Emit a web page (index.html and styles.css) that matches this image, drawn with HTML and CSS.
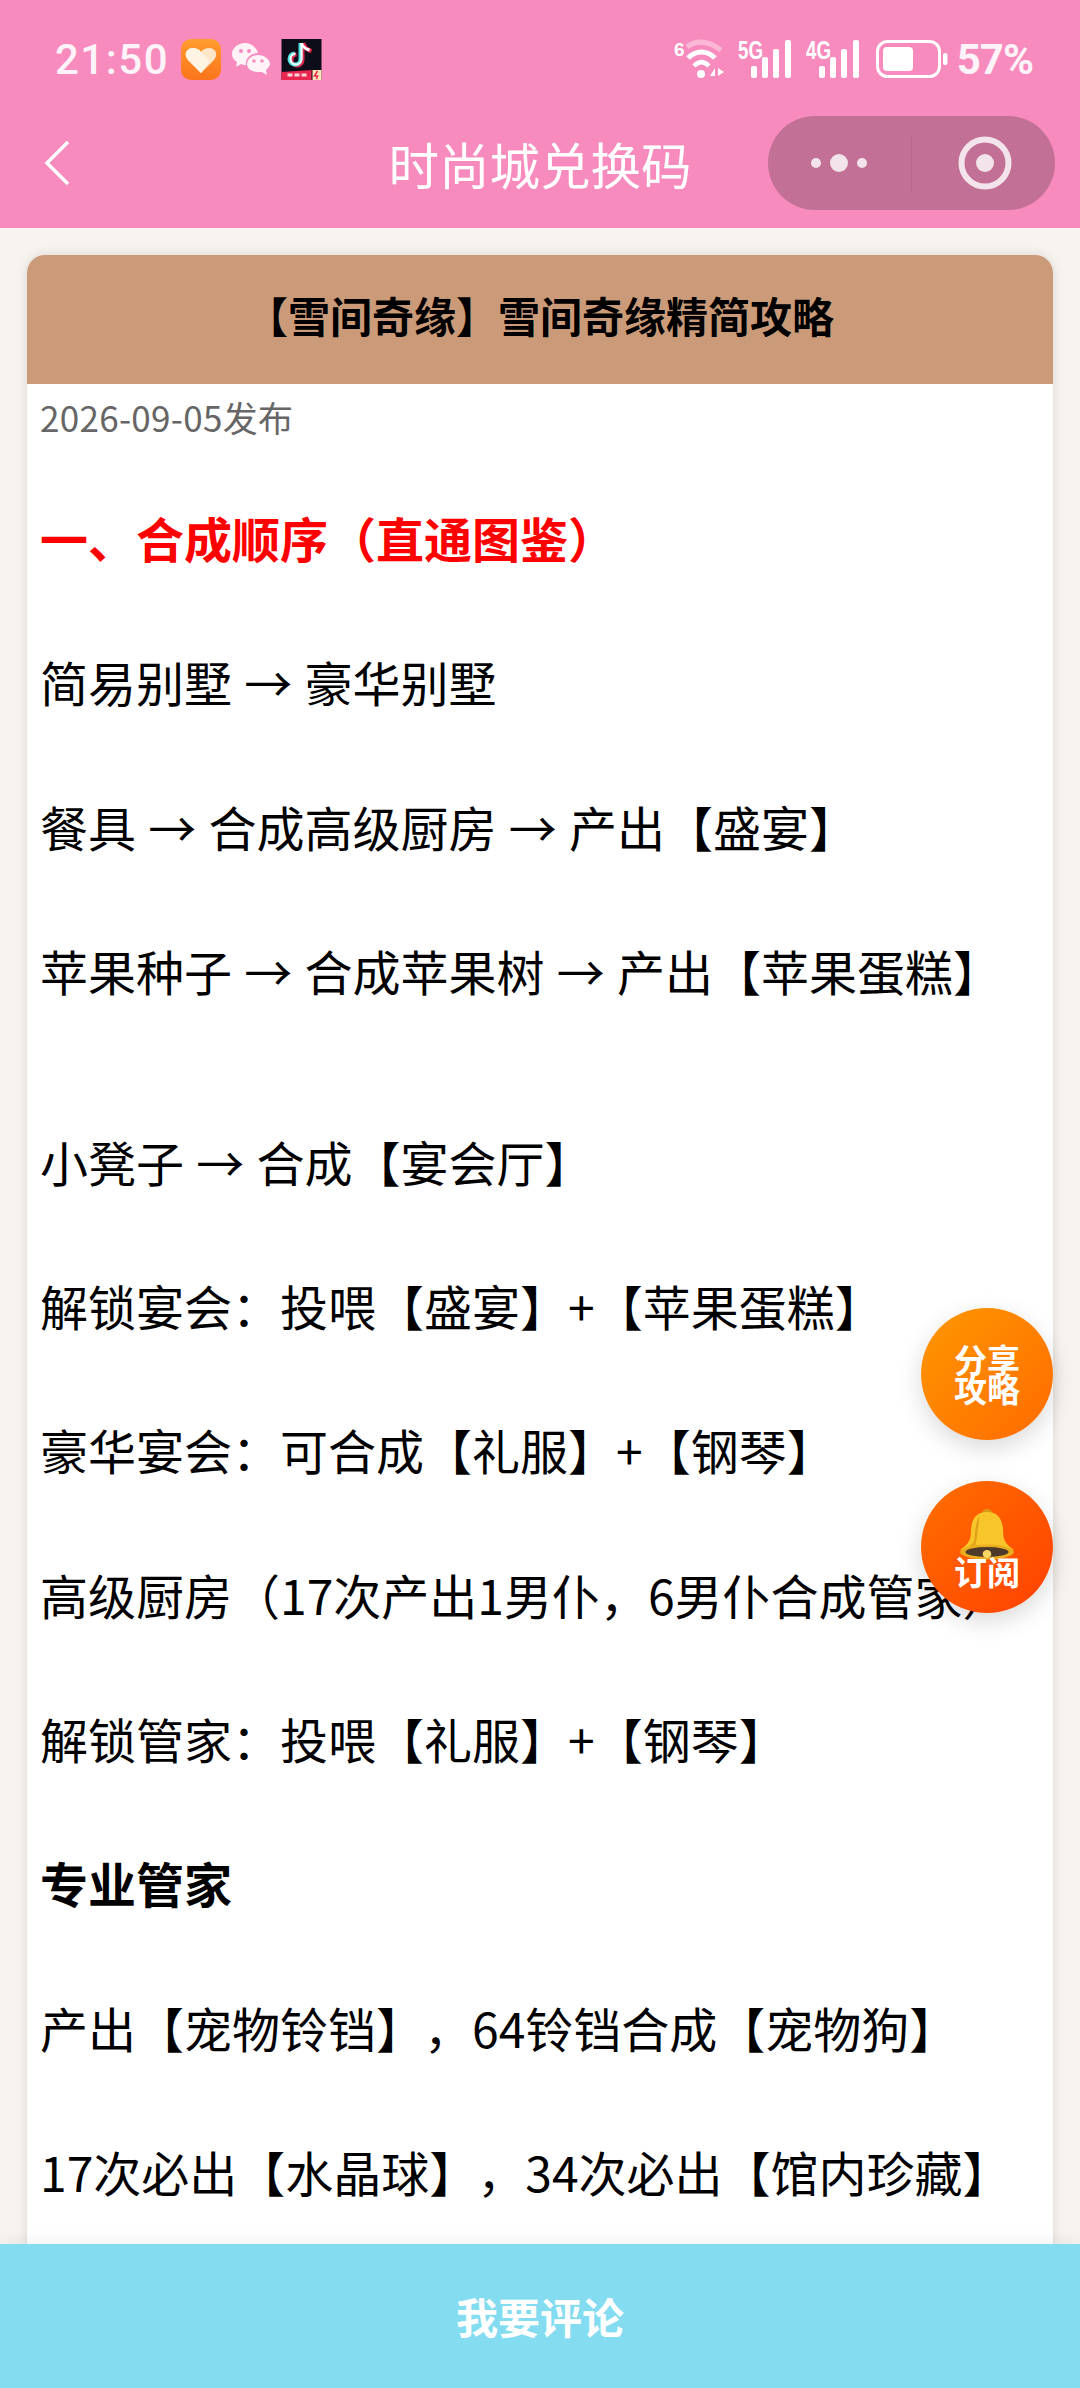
FILE: index.html
```html
<!DOCTYPE html>
<html lang="zh-CN">
<head>
    <meta charset="UTF-8">
    <meta name="viewport" content="width=device-width, initial-scale=1.0">
    <title>时尚城兑换码</title>
    <link rel="stylesheet" href="styles.css">
</head>
<body>
    <header class="top">
        <div class="status">
            <div class="status-left">
                <span class="time">21:50</span>
                <svg class="app-icon" width="40" height="41" viewBox="0 0 40 41">
                    <defs>
                        <linearGradient id="heartBg" x1="0" y1="0" x2="0" y2="1">
                            <stop offset="0" stop-color="#ff9c2e"/>
                            <stop offset="1" stop-color="#fb741c"/>
                        </linearGradient>
                    </defs>
                    <rect width="40" height="41" rx="10" fill="url(#heartBg)"/>
                    <path d="M20 34 L7 21 C2 15 6 9 12 9 C15 9 18 10 20 13 C22 10 25 9 28 9 C34 9 38 15 33 21 Z" fill="#ffe6c8"/>
                    <path d="M12 9 C15 9 18 10 20 13 L29 22 L20 34 L7 21 C2 15 6 9 12 9 Z" fill="#fff3e4"/>
                </svg>
                <svg class="app-icon" width="38" height="34" viewBox="0 0 38 34">
                    <path d="M13 1 C6 1 0 6 0 12 C0 16 2 18 5 20 L4 25 L9 22 C11 23 13 23 14 23 C13 17 18 11 26 11 C24 5 19 1 13 1 Z" fill="#fff3f8"/>
                    <path d="M26 13 C20 13 15 17 15 22 C15 27 20 30 26 30 C28 30 29 30 30 30 L35 33 L34 28 C36 26 38 24 38 22 C38 17 32 13 26 13 Z" fill="#fff3f8"/>
                    <circle cx="9" cy="9" r="2" fill="#f78bbd"/>
                    <circle cx="17" cy="9" r="2" fill="#f78bbd"/>
                    <circle cx="22" cy="19" r="1.7" fill="#f78bbd"/>
                    <circle cx="30" cy="19" r="1.7" fill="#f78bbd"/>
                </svg>
                <svg class="app-icon" width="41" height="41" viewBox="0 0 40 41">
                    <rect width="40" height="41" fill="#0c0d18"/>
                    <path d="M0 41 V33 L30 31 V41 Z" fill="#e8264f"/>
                    <rect x="31" y="31" width="9" height="10" fill="#fbe3b8"/>
                    <path d="M36 32 L33 37 H36 L35 40" fill="none" stroke="#e8264f" stroke-width="1.500"/>
                    <path d="M6 36 H27" stroke="#fbd5d5" stroke-width="3" stroke-dasharray="5 2"/>
                    <path d="M21 5 V21 A5.500 5.500 0 1 1 15 15.500" fill="none" stroke="#e8264f" stroke-width="4"/>
                    <path d="M22 4 C23 9 26 11 30 12" fill="none" stroke="#e8264f" stroke-width="4"/>
                    <path d="M19 4 V20 A5.500 5.500 0 1 1 13 14.500" fill="none" stroke="#4fe3e0" stroke-width="4"/>
                    <path d="M20 4 V20 A5.500 5.500 0 1 1 14 14.500" fill="none" stroke="#fff" stroke-width="2"/>
                    <path d="M20 4 C21 8 24 10 28 11" fill="none" stroke="#fff" stroke-width="3"/>
                </svg>
            </div>
            <div class="status-right">
                <svg width="52" height="42" viewBox="0 0 52 42">
                    <text x="0" y="18" class="net-tiny">6</text>
                    <path d="M13 9 C22 2 33 2 47 12" fill="none" stroke="#fbb8d6" stroke-width="5"/>
                    <path d="M14 20 C22 12 33 12 41 20" fill="none" stroke="#fff" stroke-width="5"/>
                    <path d="M20 28 C25 23 30 23 35 28" fill="none" stroke="#fff" stroke-width="4.500"/>
                    <circle cx="27" cy="36" r="4" fill="#fff"/>
                    <path d="M36 38 L41 30 V38 Z M44 30 V38 L50 34 Z" fill="#fff"/>
                </svg>
                <div class="signal">
                    <span class="net-label">5G</span>
                    <svg width="56" height="38" viewBox="0 0 56 38">
                        <rect x="13" y="26" width="6" height="12" rx="2" fill="#fff"/>
                        <rect x="24" y="17" width="6" height="21" rx="2" fill="#fff"/>
                        <rect x="35" y="9" width="6" height="29" rx="2" fill="#fff"/>
                        <rect x="47" y="0" width="6" height="38" rx="2" fill="#fff"/>
                    </svg>
                </div>
                <div class="signal">
                    <span class="net-label">4G</span>
                    <svg width="56" height="38" viewBox="0 0 56 38">
                        <rect x="13" y="26" width="6" height="12" rx="2" fill="#fff"/>
                        <rect x="24" y="17" width="6" height="21" rx="2" fill="#fff"/>
                        <rect x="35" y="9" width="6" height="29" rx="2" fill="#fff"/>
                        <rect x="47" y="0" width="6" height="38" rx="2" fill="#fff"/>
                    </svg>
                </div>
                <svg class="battery" width="72" height="38" viewBox="0 0 72 38">
                    <rect x="1.500" y="1.500" width="62" height="35" rx="10" fill="none" stroke="#fff" stroke-width="3"/>
                    <rect x="7" y="7" width="30" height="24" rx="4" fill="#fff"/>
                    <rect x="67" y="13" width="4.500" height="12" rx="2" fill="#fff"/>
                </svg>
                <span class="battery-num">57%</span>
            </div>
        </div>
        <nav class="nav">
            <svg class="back" width="26" height="46" viewBox="0 0 26 46">
                <path d="M24 2 L3 23 L24 44" fill="none" stroke="#fff" stroke-width="3.500"/>
            </svg>
            <div class="nav-title">时尚城兑换码</div>
            <div class="capsule">
                <svg width="66" height="20" viewBox="0 0 66 20">
                    <circle cx="10" cy="10" r="5" fill="#f3e3ea"/>
                    <circle cx="33" cy="10" r="9" fill="#f3e3ea"/>
                    <circle cx="56" cy="10" r="5" fill="#f3e3ea"/>
                </svg>
                <div class="capsule-line"></div>
                <svg width="54" height="54" viewBox="0 0 54 54">
                    <circle cx="27" cy="27" r="23.500" fill="none" stroke="#f3e3ea" stroke-width="6"/>
                    <circle cx="27" cy="27" r="9" fill="#f3e3ea"/>
                </svg>
            </div>
        </nav>
    </header>

    <main class="page">
        <article class="card">
            <h1 class="card-title">【雪间奇缘】雪间奇缘精简攻略</h1>
            <div class="card-body">
                <div class="date">2026-09-05发布</div>
                <h2 class="red-head">一、合成顺序（直通图鉴）</h2>
                <p>简易别墅 → 豪华别墅</p>
                <p>餐具 → 合成高级厨房 → 产出【盛宴】</p>
                <p>苹果种子 → 合成苹果树 → 产出【苹果蛋糕】</p>
                <p class="gap">小凳子 → 合成【宴会厅】</p>
                <p>解锁宴会：投喂【盛宴】+【苹果蛋糕】</p>
                <p>豪华宴会：可合成【礼服】+【钢琴】</p>
                <p class="nowrap">高级厨房（17次产出1男仆，6男仆合成管家）</p>
                <p>解锁管家：投喂【礼服】+【钢琴】</p>
                <p><strong>专业管家</strong></p>
                <p>产出【宠物铃铛】，64铃铛合成【宠物狗】</p>
                <p>17次必出【水晶球】，34次必出【馆内珍藏】</p>
            </div>
        </article>
    </main>

    <footer class="comment-bar">我要评论</footer>

    <div class="float-btn share">分享<br>攻略</div>
    <div class="float-btn subscribe">
        <svg width="56" height="52" viewBox="0 0 52 52" preserveAspectRatio="none">
            <circle cx="26" cy="5" r="5" fill="#d99a14"/>
            <path d="M26 3 C14 3 11 13 11 24 C11 33 6 37 1 41 H51 C46 37 41 33 41 24 C41 13 38 3 26 3 Z" fill="#f8c62b"/>
            <path d="M19 7 C15 13 15 25 14 32 C12 36 8 38 6 41 H14 C17 32 18 16 19 7 Z" fill="#e0a21b"/>
            <ellipse cx="26" cy="43" rx="25" ry="7.500" fill="#e9ad1e"/>
            <ellipse cx="26" cy="43" rx="20" ry="5" fill="#4d3a2a"/>
            <circle cx="26" cy="45" r="4" fill="#f8d766"/>
        </svg>
        <span>订阅</span>
    </div>
</body>
</html>
```

FILE: styles.css
```css
html, body {
    margin: 0;
    padding: 0;
}
body {
    position: relative;
    display: flex;
    flex-direction: column;
    width: 1080px;
    height: 2388px;
    overflow: hidden;
    background-color: #f7f4ef;
    color: #000;
    font-family: "Noto Sans CJK SC", "Noto Sans", sans-serif;
    text-spacing-trim: space-all;
}

/* top pink area */
.top {
    background-color: #f78bbd;
    color: #fff;
    flex-shrink: 0;
}
.status {
    height: 116px;
    display: flex;
    justify-content: space-between;
    align-items: center;
    padding: 0 47px 0 55px;
    box-sizing: border-box;
}
.status-left {
    display: flex;
    align-items: center;
    gap: 11px;
    padding-top: 2px;
}
.time {
    font-family: Roboto, sans-serif;
    font-weight: 500;
    font-size: 42px;
    letter-spacing: 1.500px;
    color: #fdf3f8;
    margin-right: 1px;
}
.status-right {
    display: flex;
    align-items: center;
    gap: 12px;
    padding-top: 2px;
}
.signal {
    position: relative;
    display: flex;
}
.net-label {
    position: absolute;
    top: -1px;
    left: 0;
    font-family: "Liberation Sans", sans-serif;
    font-weight: 700;
    font-size: 25px;
    line-height: 22px;
    transform: scaleX(0.75);
    transform-origin: left;
}
.net-tiny {
    font-family: "Liberation Sans", sans-serif;
    font-weight: 700;
    font-size: 19px;
    fill: #fff;
}
.battery {
    margin-left: 2px;
}
.battery-num {
    font-family: Roboto, sans-serif;
    font-weight: 700;
    font-size: 42px;
    letter-spacing: -1px;
    color: #fdf3f8;
    margin-left: -3px;
}
.nav {
    position: relative;
    display: flex;
    justify-content: space-between;
    align-items: center;
    height: 94px;
    padding: 0 25px 18px 44px;
}
.back {
    display: block;
}
.nav-title {
    position: absolute;
    left: 0;
    right: 0;
    top: 0;
    height: 94px;
    line-height: 94px;
    text-align: center;
    font-size: 50.500px;
    font-weight: 400;
}
.capsule {
    position: relative;
    display: flex;
    align-items: center;
    width: 287px;
    height: 94px;
    border-radius: 47px;
    background-color: #c27095;
    box-sizing: border-box;
    padding-left: 38px;
}
.capsule-line {
    width: 1px;
    height: 56px;
    margin: 0 46px 0 39px;
    background-color: #b7688b;
}

/* content */
.page {
    flex: 1;
    min-height: 0;
    overflow: hidden;
    padding: 27px 27px 0;
}
.card {
    background-color: #fff;
    border-radius: 18px 18px 0 0;
    box-shadow: 0 0 12px rgba(0, 0, 0, 0.12);
}
.card-title {
    margin: 0;
    height: 129px;
    line-height: 120px;
    text-align: center;
    font-size: 42px;
    font-weight: 700;
    background-color: #cb9b79;
    border-radius: 18px 18px 0 0;
}
.card-body {
    padding: 10px 13px 60px;
}
.date {
    font-size: 35px;
    line-height: 46px;
    letter-spacing: 0.300px;
    color: #666;
}
.red-head {
    margin: 61px 0 0;
    font-size: 48px;
    line-height: 72px;
    font-weight: 700;
    color: #f00;
}
.card-body p {
    margin: 72.300px 0 0;
    font-size: 48px;
    line-height: 72px;
    word-spacing: 1.500px;
}
.card-body p.gap {
    margin-top: 119px;
}
.card-body p.nowrap {
    white-space: nowrap;
}

.comment-bar {
    flex-shrink: 0;
    height: 144px;
    line-height: 144px;
    text-align: center;
    background-color: #84dcf1;
    color: #fff;
    font-size: 42px;
    font-weight: 700;
    position: relative;
    z-index: 1;
    box-shadow: 0 -4px 14px rgba(0, 0, 0, 0.05);
}

/* floating buttons */
.float-btn {
    position: absolute;
    left: 921px;
    width: 132px;
    height: 132px;
    border-radius: 50%;
    display: flex;
    flex-direction: column;
    align-items: center;
    justify-content: center;
    text-align: center;
    color: #fff;
    font-size: 33px;
    font-weight: 700;
    line-height: 29px;
    box-shadow: 0 8px 24px rgba(0, 0, 0, 0.15);
}
.share {
    top: 1308px;
    display: block;
    padding-top: 37px;
    box-sizing: border-box;
    background: linear-gradient(135deg, #ff9800, #ff6a00);
}
.subscribe {
    top: 1481px;
    background: linear-gradient(135deg, #ff6f00, #ff4000);
}
.subscribe svg {
    display: block;
}
.subscribe span {
    margin-top: -4px;
}
```
